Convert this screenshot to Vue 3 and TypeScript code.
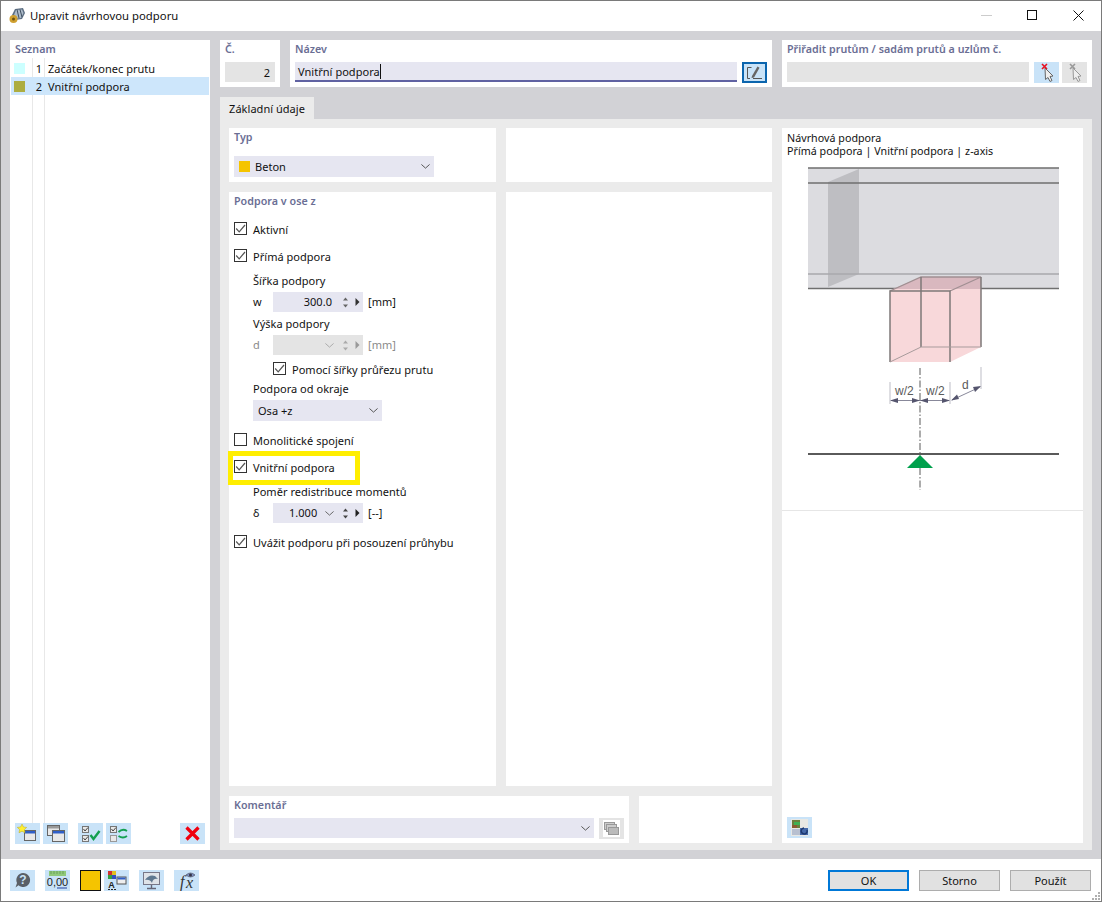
<script setup lang="ts">
const rows = [
  { n: 1, name: 'Začátek/konec prutu', color: '#ccffff', active: false },
  { n: 2, name: 'Vnitřní podpora', color: '#adad40', active: true },
]
</script>

<template>
  <div class="win">
    <header class="titlebar">
      <svg class="appicon" width="17" height="16" viewBox="0 0 17 16">
        <path d="M6 1 L14 0 L16 5 L13 11 L6 12 L3 7 Z" fill="#5d6f83" />
        <path d="M7 2 L13 1.500 L14.500 5 L12 10 L7 10.500 L5 7 Z" fill="#aebccb" />
        <path d="M8 1.500 L10 10 M11 1.500 L13 9" stroke="#3f4f60" stroke-width="1" />
        <circle cx="4.500" cy="11" r="4" fill="#d0a030" />
        <circle cx="4.500" cy="11" r="1.500" fill="#6b5210" />
      </svg>
      <span class="wintitle">Upravit návrhovou podporu</span>
      <div class="winbtns">
        <span class="wb"><i class="wmin"></i></span>
        <span class="wb"><i class="wmax"></i></span>
        <span class="wb">
          <svg width="11" height="11" viewBox="0 0 11 11"><path d="M.5 .5 L10.500 10.500 M10.500 .5 L.5 10.500" stroke="#111" stroke-width="1" /></svg>
        </span>
      </div>
    </header>

    <div class="body">
      <aside class="left card">
        <div class="ttl">Seznam</div>
        <div class="listwrap">
          <div class="rules"><i></i><i></i></div>
          <div v-for="r in rows" :key="r.n" class="lrow" :class="{ on: r.active }">
            <span class="lsw" :style="{ background: r.color }"></span>
            <span class="lnum">{{ r.n }}</span>
            <span class="lname">{{ r.name }}</span>
          </div>
        </div>
        <div class="ltools">
          <button class="ib">
            <svg width="25" height="21" viewBox="0 0 25 21"><rect x="9.500" y="7.500" width="11" height="10" fill="#e8e8e8" stroke="#666" /><rect x="10" y="8" width="10" height="2.500" fill="#2f5fc8" /><path d="M7 1 l1.500 3 3.200 .4 -2.300 2.200 .6 3.200 -3 -1.600 -3 1.600 .6 -3.200 -2.300 -2.200 3.200 -.4z" fill="#ffef30" stroke="#b8a820" stroke-width=".5" /></svg>
          </button>
          <button class="ib">
            <svg width="25" height="21" viewBox="0 0 25 21"><rect x="4.500" y="2.500" width="12" height="10" fill="#e8e8e8" stroke="#666" /><rect x="5" y="3" width="11" height="2.500" fill="#999" /><rect x="9.500" y="7.500" width="12" height="11" fill="#e8e8e8" stroke="#666" /><rect x="10" y="8" width="11" height="2.500" fill="#2f5fc8" /></svg>
          </button>
          <button class="ib gap1">
            <svg width="25" height="21" viewBox="0 0 25 21"><rect x="4.500" y="3.500" width="6" height="6" fill="#e8e8e8" stroke="#777" /><rect x="4.500" y="12.500" width="6" height="6" fill="#e8e8e8" stroke="#777" /><path d="M5.500 6 l1.500 2 3 -3.500 M5.500 15 l1.500 2 3 -3.500" fill="none" stroke="#444" /><path d="M12.500 12 l3 4 6 -8" fill="none" stroke="#14a050" stroke-width="2.400" /></svg>
          </button>
          <button class="ib gap2">
            <svg width="25" height="21" viewBox="0 0 25 21"><rect x="4.500" y="3.500" width="6" height="6" fill="#e8e8e8" stroke="#777" /><rect x="4.500" y="12.500" width="6" height="6" fill="#e8e8e8" stroke="#999" /><path d="M5.500 6 l1.500 2 3 -3.500" fill="none" stroke="#444" /><path d="M12.500 9 q4 -4 8.500 -1 M21 13 q-4 3 -8.500 0" fill="none" stroke="#14a050" stroke-width="1.800" /></svg>
          </button>
          <button class="ib gap3">
            <svg width="25" height="21" viewBox="0 0 25 21"><path d="M6.500 4.500 L18.500 16.500 M18.500 4.500 L6.500 16.500" stroke="#f00010" stroke-width="3.200" /></svg>
          </button>
        </div>
      </aside>

      <main class="main">
        <section class="top">
          <div class="card fno">
            <div class="ttl">Č.</div>
            <div class="ro num">2</div>
          </div>
          <div class="card fname">
            <div class="ttl">Název</div>
            <div class="inrow">
              <div class="nameinput"><span>Vnitřní podpora</span><i class="caret"></i></div>
              <button class="ib editbtn">
                <svg width="21" height="17" viewBox="0 0 21 17"><path d="M7.500 3.500 H3.500 V14.500 H6 M9 14.500 H18" fill="none" stroke="#555" /><path d="M8 12 L13.500 2.500 L15.500 3.700 L10 13.500 L7.500 14 Z" fill="#666" /></svg>
              </button>
            </div>
          </div>
          <div class="card fassign">
            <div class="ttl">Přiřadit prutům / sadám prutů a uzlům č.</div>
            <div class="inrow">
              <div class="ro grow"></div>
              <button class="ib pick">
                <svg width="25" height="21" viewBox="0 0 25 21"><path d="M11 6 L19 14 L16 14.500 L18 18.500 L16 19.500 L14 15.500 L11.500 17.500 Z" fill="#eee" stroke="#666" /><path d="M8 2 L13 7 M13 2 L8 7" stroke="#e81020" stroke-width="1.600" /></svg>
              </button>
              <button class="ib pick dis">
                <svg width="25" height="21" viewBox="0 0 25 21"><path d="M11 6 L19 14 L16 14.500 L18 18.500 L16 19.500 L14 15.500 L11.500 17.500 Z" fill="#eee" stroke="#999" /><path d="M8 2 L13 7 M13 2 L8 7" stroke="#999" stroke-width="1.600" /></svg>
              </button>
            </div>
          </div>
        </section>

        <div class="tabs"><div class="tab">Základní údaje</div></div>

        <section class="tabbody">
          <div class="col-form">
            <div class="twocol r1">
              <div class="card typ">
                <div class="ttl">Typ</div>
                <div class="select typsel">
                  <span class="tsw"></span><span class="sv">Beton</span>
                  <svg class="chev" width="9" height="5" viewBox="0 0 11 6"><path d="M.5 .5 L5.500 5 L10.500 .5" fill="none" stroke="#555" stroke-width="1.200" /></svg>
                </div>
              </div>
              <div class="card"></div>
            </div>

            <div class="twocol r2">
              <div class="card form">
                <div class="ttl">Podpora v ose z</div>

                <label class="chk m10"><span class="cb"><svg width="13" height="13" viewBox="0 0 13 13"><path d="M2.200 6.500 L5.200 9.800 L11 3" fill="none" stroke="#555" stroke-width="1.200" /></svg></span>Aktivní</label>
                <label class="chk m9"><span class="cb"><svg width="13" height="13" viewBox="0 0 13 13"><path d="M2.200 6.500 L5.200 9.800 L11 3" fill="none" stroke="#555" stroke-width="1.200" /></svg></span>Přímá podpora</label>

                <div class="sub m7">Šířka podpory</div>
                <div class="spinrow m2">
                  <span class="sym">w</span>
                  <div class="spin">
                    <span class="val">300.0</span>
                    <svg class="ud" width="7" height="13" viewBox="0 0 7 13"><path d="M3.500 1.500 L6 4.500 H1 Z M3.500 11.500 L6 8.500 H1 Z" fill="#666" /></svg>
                    <svg class="rt" width="5" height="8" viewBox="0 0 5 8"><path d="M.5 0 L4.500 4 L.5 8 Z" fill="#333" /></svg>
                  </div>
                  <span class="unit">[mm]</span>
                </div>

                <div class="sub m3">Výška podpory</div>
                <div class="spinrow m2 off">
                  <span class="sym">d</span>
                  <div class="spin">
                    <svg class="vee" width="9" height="5" viewBox="0 0 11 6"><path d="M.5 .5 L5.500 5 L10.500 .5" fill="none" stroke="#aaa" stroke-width="1.200" /></svg>
                    <svg class="ud" width="7" height="13" viewBox="0 0 7 13"><path d="M3.500 1.500 L6 4.500 H1 Z M3.500 11.500 L6 8.500 H1 Z" fill="#aaa" /></svg>
                    <svg class="rt" width="5" height="8" viewBox="0 0 5 8"><path d="M.5 0 L4.500 4 L.5 8 Z" fill="#999" /></svg>
                  </div>
                  <span class="unit">[mm]</span>
                </div>

                <label class="chk m5 in2"><span class="cb"><svg width="13" height="13" viewBox="0 0 13 13"><path d="M2.200 6.500 L5.200 9.800 L11 3" fill="none" stroke="#555" stroke-width="1.200" /></svg></span>Pomocí šířky průřezu prutu</label>

                <div class="sub m2">Podpora od okraje</div>
                <div class="select edge m2">
                  <span class="sv">Osa +z</span>
                  <svg class="chev" width="9" height="5" viewBox="0 0 11 6"><path d="M.5 .5 L5.500 5 L10.500 .5" fill="none" stroke="#555" stroke-width="1.200" /></svg>
                </div>

                <label class="chk m10"><span class="cb"></span>Monolitické spojení</label>
                <label class="chk m9 hl"><span class="cb"><svg width="13" height="13" viewBox="0 0 13 13"><path d="M2.200 6.500 L5.200 9.800 L11 3" fill="none" stroke="#555" stroke-width="1.200" /></svg></span>Vnitřní podpora<i class="yellow"></i></label>

                <div class="sub m7">Poměr redistribuce momentů</div>
                <div class="spinrow m2">
                  <span class="sym">δ</span>
                  <div class="spin">
                    <span class="val v2">1.000</span>
                    <svg class="vee" width="9" height="5" viewBox="0 0 11 6"><path d="M.5 .5 L5.500 5 L10.500 .5" fill="none" stroke="#666" stroke-width="1.200" /></svg>
                    <svg class="ud" width="7" height="13" viewBox="0 0 7 13"><path d="M3.500 1.500 L6 4.500 H1 Z M3.500 11.500 L6 8.500 H1 Z" fill="#444" /></svg>
                    <svg class="rt" width="5" height="8" viewBox="0 0 5 8"><path d="M.5 0 L4.500 4 L.5 8 Z" fill="#222" /></svg>
                  </div>
                  <span class="unit">[--]</span>
                </div>

                <label class="chk m10"><span class="cb"><svg width="13" height="13" viewBox="0 0 13 13"><path d="M2.200 6.500 L5.200 9.800 L11 3" fill="none" stroke="#555" stroke-width="1.200" /></svg></span>Uvážit podporu při posouzení průhybu</label>
              </div>
              <div class="card"></div>
            </div>

            <div class="r3">
              <div class="card comment">
                <div class="ttl">Komentář</div>
                <div class="inrow">
                  <div class="select csel">
                    <svg class="chev" width="9" height="5" viewBox="0 0 11 6"><path d="M.5 .5 L5.500 5 L10.500 .5" fill="none" stroke="#555" stroke-width="1.200" /></svg>
                  </div>
                  <button class="ib pick dis">
                    <svg width="25" height="21" viewBox="0 0 25 21"><rect x="4" y="2" width="17" height="17" fill="#fff" /><rect x="5.500" y="4.500" width="10" height="7" fill="#ccc" stroke="#999" /><rect x="7.500" y="6.500" width="10" height="7" fill="#ccc" stroke="#999" /><rect x="9.500" y="9.500" width="10" height="7" fill="#bbb" stroke="#999" /></svg>
                  </button>
                </div>
              </div>
              <div class="card blank"></div>
            </div>
          </div>

          <div class="card preview">
            <div class="ptext">Návrhová podpora<br />Přímá podpora | Vnitřní podpora | z-axis</div>
            <svg class="diagram" width="301" height="344" viewBox="782 157 301 344">
              <rect x="808" y="168" width="251" height="121" fill="#dcdce0" />
              <path d="M828 182 L859 169 V274 L828 287 Z" fill="#bebec2" />
              <path d="M808 168 H1059 M808 183 H1059 M808 288.500 H1059" stroke="#6f6f6f" stroke-width="1.300" fill="none" />
              <path d="M808 274 H1059" stroke="#a9a9ad" stroke-width="1.300" />
              <path d="M890 291 L921 277 H981 V347 L950 362 H890 Z" fill="#f8d8da" />
              <path d="M893 289 L921 277 H981 V289 Z" fill="#d9b8bf" />
              <path d="M950 291 L981 277 H921 L890 291" fill="none" stroke="#a08f92" stroke-width="1.300" />
              <path d="M890 362 V291 H950 V362 M921 277 V347 M981 277 V347" fill="none" stroke="#7d7878" stroke-width="1.500" />
              <path d="M890 362 L921 347 H981" fill="none" stroke="#a89b9c" stroke-width="1" />
              <path d="M920 368 V490" stroke="#808080" stroke-width="1.300" stroke-dasharray="7 2 1.500 2" />
              <path d="M890 382 V404 M950 382 V404 M981 367 V389" stroke="#c8c8d0" stroke-width="1.200" />
              <path d="M891 400.500 H949 M952 400 L980 387" stroke="#6a6a80" stroke-width=".8" fill="none" />
              <path d="M890 400.500 L898 398 V403 Z M920 400.500 L912 398 V403 Z M920 400.500 L928 398 V403 Z M950 400.500 L942 398 V403 Z M951 400.500 L957 394.500 L959 399 Z M981 386 L973 387 L975 392 Z" fill="#55556e" />
              <text x="895" y="395" class="dt">w/2</text>
              <text x="926" y="395" class="dt">w/2</text>
              <text x="962" y="389" class="dt">d</text>
              <path d="M808 454 H1059" stroke="#5a5a5a" stroke-width="2" />
              <path d="M920 455 L933 468 H907 Z" fill="#00a04c" />
            </svg>
            <div class="pdiv"></div>
            <div class="pfoot">
              <button class="ib">
                <svg width="25" height="21" viewBox="0 0 25 21"><rect x="4" y="2" width="17" height="17" fill="#e8e8e4" /><rect x="5" y="3" width="8" height="8" fill="#6c7f3a" /><rect x="7" y="5" width="6" height="3" fill="#3fb050" /><rect x="5" y="8" width="5" height="3" fill="#8a5a30" /><rect x="5" y="12" width="10" height="6" fill="#b8c0d0" /><rect x="13" y="11" width="8" height="7" fill="#4468a8" /><path d="M20 13 a3 3 0 1 1 -3 -2" fill="none" stroke="#1c3870" stroke-width="1.500" /></svg>
              </button>
            </div>
          </div>
        </section>
      </main>
    </div>

    <footer class="footer">
      <div class="ficons">
        <button class="ib">
          <svg width="25" height="21" viewBox="0 0 25 21"><path d="M13 3 a7 7 0 1 1 -4.500 12.300 L5.500 17.500 L7 13 A7 7 0 0 1 13 3 Z" fill="#5a5f66" /><text x="13" y="14" class="q">?</text></svg>
        </button>
        <button class="ib f2">
          <svg width="25" height="21" viewBox="0 0 25 21"><rect x="4" y="1" width="17" height="5" fill="#8fc87a" /><path d="M6 1 V4 M9 1 V4 M12 1 V4 M15 1 V4 M18 1 V4" stroke="#5a9050" stroke-width=".7" /><text x="12.500" y="16" class="zero">0,00</text><path d="M12 18 H22" stroke="#2040a0" /></svg>
        </button>
        <span class="colorbox"></span>
        <button class="ib">
          <svg width="25" height="21" viewBox="0 0 25 21"><rect x="4" y="1" width="4" height="4" fill="#d03030" /><rect x="8" y="1" width="4" height="4" fill="#e0c020" /><rect x="4" y="5" width="4" height="4" fill="#30a040" /><rect x="8" y="5" width="4" height="4" fill="#3050c0" /><rect x="13" y="7" width="9" height="7" fill="#eee" stroke="#555" /><rect x="13.500" y="7.500" width="8" height="2" fill="#2f5fc8" /><text x="7.500" y="18" class="a">A</text><path d="M4 19.500 H13" stroke="#222" stroke-dasharray="2 1" /></svg>
        </button>
        <button class="ib f5">
          <svg width="25" height="21" viewBox="0 0 25 21"><rect x="4.500" y="2.500" width="16" height="12" fill="#dfe3e8" stroke="#778" /><path d="M6 10 q4 -6 10 -4 l3 3 q-5 -1 -6 4 q-2 -4 -7 -3z" fill="#5f7890" /><path d="M12.500 15 V18 M8 18.500 H17" stroke="#667" stroke-width="1.400" /></svg>
        </button>
        <button class="ib f6">
          <svg width="25" height="21" viewBox="0 0 25 21"><text x="6" y="17" class="fx">f</text><text x="12" y="18" class="fx">x</text><path d="M12 5 q4.500 -4 9 0 q-4.500 4 -9 0z" fill="#7a8fc0" stroke="#445" stroke-width=".6" /><circle cx="16.500" cy="5" r="1.500" fill="#334" /></svg>
        </button>
      </div>
      <div class="actions">
        <button class="btn primary">OK</button>
        <button class="btn">Storno</button>
        <button class="btn">Použít</button>
      </div>
      <svg class="grip" width="10" height="10" viewBox="0 0 10 10"><path d="M7 1h2v2h-2z M4 4h2v2h-2z M7 4h2v2h-2z M1 7h2v2h-2z M4 7h2v2h-2z M7 7h2v2h-2z" fill="#b0b0b0" /></svg>
    </footer>
  </div>
</template>

<style>
html, body { margin: 0; padding: 0; background: #fff; }
</style>

<style scoped>
.win { width: 1102px; height: 902px; box-sizing: border-box; border: 1px solid #7a7a7a; background: #fff; font: 11px/18px "Noto Sans", sans-serif; letter-spacing: .03px; color: #111; display: flex; flex-direction: column; overflow: hidden; }
button { padding: 0; margin: 0; border: 0; font: inherit; color: inherit; }

.titlebar { height: 30px; flex: none; display: flex; align-items: center; background: #fff; }
.appicon { margin-left: 8px; }
.wintitle { margin-left: 4px; font-size: 11.300px; }
.winbtns { margin-left: auto; display: flex; align-items: center; }
.wb { width: 46px; height: 30px; padding-bottom: 2px; box-sizing: border-box; display: flex; align-items: center; justify-content: center; }
.wmin { width: 11px; height: 1px; background: #ccc; display: block; }
.wmax { width: 10px; height: 10px; box-sizing: border-box; border: 1px solid #111; display: block; }

.body { flex: none; height: 828px; box-sizing: border-box; background: #d2d2d6; display: flex; padding: 9px; gap: 10px; }
.card { background: #fff; box-sizing: border-box; }
.ttl { font-weight: 600; font-size: 10.700px; color: #6a6e94; padding: 0 5px; height: 18px; line-height: 19px; }

.left { width: 200px; display: flex; flex-direction: column; }
.listwrap { position: relative; flex: 1; padding: 1px 1px 0; }
.rules { position: absolute; left: 0; top: 0; bottom: 0; width: 100%; }
.rules i { position: absolute; top: 0; bottom: 0; width: 1px; background: #e8e8e8; }
.rules i:first-child { left: 22px; }
.rules i:last-child { left: 34px; }
.lrow { position: relative; height: 18px; display: flex; align-items: center; line-height: 19px; }
.lrow.on { background: #cde6fb; }
.lsw { width: 11px; height: 11px; margin-left: 3px; flex: none; }
.lnum { width: 12px; margin-left: 5px; text-align: right; flex: none; }
.lname { margin-left: 6px; }
.ltools { display: flex; padding: 0 0 3px 5px; height: 24px; flex: none; }
.ib { width: 25px; height: 21px; background: #c9e3f8; display: block; flex: none; }
.ib svg { display: block; }
.ltools .ib + .ib { margin-left: 3px; }
.ltools .gap1 { margin-left: 10px !important; }
.ltools .gap3 { margin-left: 49px !important; }

.main { width: 872px; display: flex; flex-direction: column; }
.top { display: flex; gap: 10px; height: 47px; flex: none; }
.fno { width: 60px; }
.ro { height: 20px; background: #e4e4e4; }
.num { margin: 4px 5px 0; text-align: right; padding-right: 5px; line-height: 21px; }
.fname { width: 482px; }
.inrow { display: flex; margin: 4px 5px 0; gap: 5px; }
.nameinput { flex: 1; height: 20px; box-sizing: border-box; background: #e6e6f1; border-bottom: 2px solid #6062a2; padding-left: 3px; line-height: 19px; display: flex; align-items: center; }
.caret { display: block; width: 1px; height: 15px; background: #111; }
.editbtn { box-sizing: border-box; border: 2px solid #0b65ae; }
.fassign { width: 310px; }
.grow { flex: 1; }
.pick + .pick { margin-left: -2px; }
.dis { background: #e4e4e4; }

.tabs { height: 22px; margin-top: 10px; flex: none; }
.tab { width: 94px; height: 22px; background: #ebebeb; text-align: center; line-height: 23px; }
.tabbody { flex: 1; background: #ebebeb; display: flex; padding: 9px 9px 7px; gap: 10px; min-height: 0; }
.col-form { width: 543px; flex: none; display: flex; flex-direction: column; gap: 10px; }
.twocol { display: grid; grid-template-columns: 267px 266px; gap: 10px; }
.r1 { height: 54px; flex: none; }
.r2 { flex: 1; }
.r3 { display: grid; grid-template-columns: 400px 133px; gap: 10px; height: 47px; flex: none; }
.typ .typsel { margin: 10px 0 0 5px; width: 200px; }

.select { height: 21px; background: #e6e6f1; display: flex; align-items: center; box-sizing: border-box; line-height: 22px; }
.tsw { width: 11px; height: 11px; background: #f5c400; margin: 0 5px; }
.sv { display: block; }
.edge { width: 129px; margin-left: 19px; padding-left: 5px; }
.chev { margin-left: auto; margin-right: 4px; }
.csel { width: 360px; height: 20px; }

.form { padding-left: 5px; }
.form .ttl { padding: 0; }
.chk { display: flex; align-items: center; height: 18px; position: relative; line-height: 17px; }
.cb { width: 13px; height: 13px; box-sizing: border-box; border: 1px solid #333; margin: 0 6px 1px 0; flex: none; display: block; position: relative; background: #fff; }
.cb svg { position: absolute; left: -1px; top: -1px; display: block; }
.in2 { margin-left: 39px; }
.sub { margin-left: 19px; height: 18px; line-height: 17px; }
.spinrow { display: flex; align-items: center; height: 20px; margin-left: 19px; line-height: 20px; }
.sym { width: 20px; flex: none; }
.spin { width: 90px; height: 20px; background: #e6e6f1; display: flex; align-items: center; position: relative; flex: none; }
.val { margin-left: 25px; width: 34px; text-align: right; }
.val.v2 { margin-left: 16px; width: 28px; }
.ud { position: absolute; left: 69px; top: 4px; }
.rt { position: absolute; left: 82px; top: 6px; }
.vee { position: absolute; left: 52px; top: 8px; }
.unit { margin-left: 5px; }
.off .sym, .off .unit { color: #8a8a8a; }
.off .spin { background: #e4e4e4; }
.m2 { margin-top: 2px; }
.m3 { margin-top: 3px; }
.m5 { margin-top: 5px; }
.m7 { margin-top: 7px; }
.m9 { margin-top: 9px; }
.m10 { margin-top: 10px; }
.yellow { position: absolute; left: -6px; top: -7px; width: 132px; height: 34px; box-sizing: border-box; border: 5px solid #ffee00; pointer-events: none; }

.preview { width: 301px; flex: none; display: flex; flex-direction: column; }
.ptext { padding: 4px 5px 0; font-size: 10.700px; line-height: 13px; height: 25px; flex: none; }
.diagram { display: block; flex: none; }
.dt { font: 12px "Liberation Sans", sans-serif; fill: #5a5a5a; }
.pdiv { height: 1px; background: #e6e6e6; margin-top: 9px; flex: none; }
.pfoot { margin-top: auto; padding: 0 0 5px 5px; }

.footer { flex: 1; display: flex; align-items: center; justify-content: space-between; background: #fff; padding: 0 10px 0 9px; position: relative; }
.ficons { display: flex; }
.f2 { margin-left: 10px; }
.colorbox { width: 21px; height: 21px; box-sizing: border-box; border: 1px solid #111; background: #f5c400; margin: 0 3px 0 10px; }
.f5, .f6 { margin-left: 10px; }
.actions { display: flex; gap: 10px; }
.btn { width: 81px; height: 21px; box-sizing: border-box; background: #e1e1e1; border: 1px solid #adadad; text-align: center; line-height: 19px; }
.btn.primary { border: 2px solid #0078d7; line-height: 18px; }
.grip { position: absolute; right: 0; bottom: 0; display: block; }
.q { font: bold 12px "Liberation Sans", sans-serif; fill: #c9e3f8; text-anchor: middle; }
.zero { font: 11px "Liberation Sans", sans-serif; fill: #222; text-anchor: middle; }
.a { font: bold 9px "Liberation Sans", sans-serif; fill: #222; text-anchor: middle; }
.fx { font: italic 16px "Liberation Serif", serif; fill: #333; }
</style>
